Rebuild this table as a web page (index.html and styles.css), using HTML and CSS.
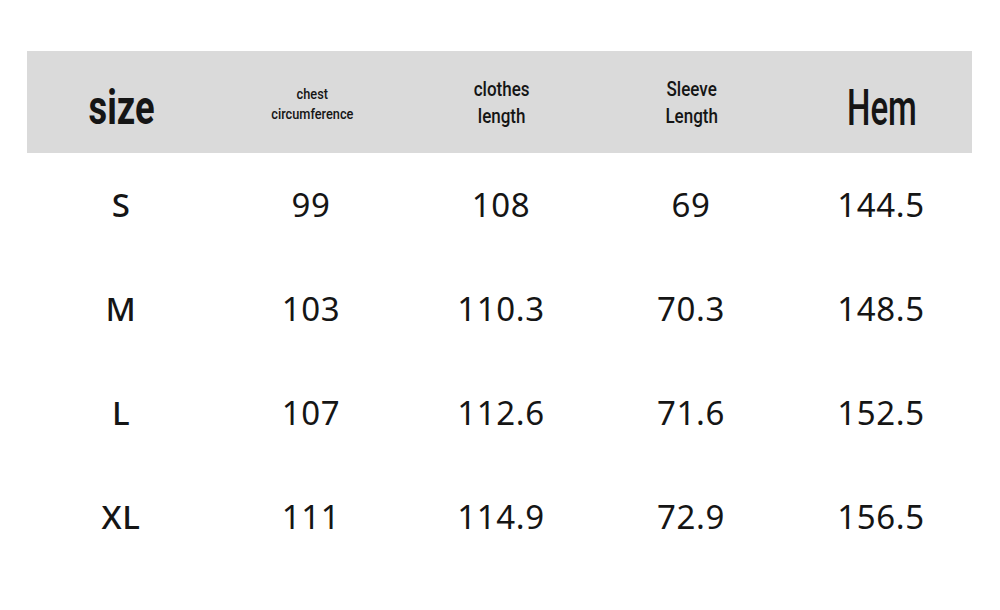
FILE: index.html
```html
<!DOCTYPE html>
<html>
<head>
<meta charset="utf-8">
<link rel="stylesheet" href="styles.css">
</head>
<body>
<div class="table">
  <div class="head">
    <div class="hcell"><span class="h-size">size</span></div>
    <div class="hcell"><span class="h-small">chest<br>circumference</span></div>
    <div class="hcell"><span class="h-mid">clothes<br>length</span></div>
    <div class="hcell"><span class="h-mid">Sleeve<br>Length</span></div>
    <div class="hcell"><span class="h-hem">Hem</span></div>
  </div>
  <div class="row">
    <div class="cell size">S</div><div class="cell">99</div><div class="cell">108</div><div class="cell">69</div><div class="cell">144.5</div>
  </div>
  <div class="row">
    <div class="cell size">M</div><div class="cell">103</div><div class="cell">110.3</div><div class="cell">70.3</div><div class="cell">148.5</div>
  </div>
  <div class="row">
    <div class="cell size">L</div><div class="cell">107</div><div class="cell">112.6</div><div class="cell">71.6</div><div class="cell">152.5</div>
  </div>
  <div class="row">
    <div class="cell size">XL</div><div class="cell">111</div><div class="cell">114.9</div><div class="cell">72.9</div><div class="cell">156.5</div>
  </div>
</div>
</body>
</html>
```

FILE: styles.css
```css
html, body {
  margin: 0;
  padding: 0;
  background: #ffffff;
}
body {
  width: 1000px;
  height: 610px;
  overflow: hidden;
  font-family: "Noto Sans", "Open Sans", sans-serif;
  color: #111;
}
.table {
  padding-top: 51px;
  padding-left: 27px;
}
.head {
  width: 945px;
  height: 102px;
  background: #dadada;
  display: grid;
  grid-template-columns: repeat(5, 190px);
}
.hcell {
  display: flex;
  align-items: center;
  justify-content: center;
  text-align: center;
  font-family: "Roboto", sans-serif;
  color: #151515;
}
.hcell:first-child { margin-left: -1px; }
.hcell span {
  display: inline-block;
  white-space: nowrap;
}
.h-size {
  font-size: 49px;
  font-weight: 700;
  transform: scaleX(0.74);
  line-height: 1;
  margin-top: 10px;
}
.h-small {
  font-size: 15px;
  font-weight: 500;
  line-height: 20px;
  transform: scaleX(0.85);
  margin-top: 3px;
}
.h-mid {
  font-size: 20.5px;
  font-weight: 500;
  line-height: 27px;
  transform: scaleX(0.83);
  margin-top: 1px;
}
.h-hem {
  font-size: 50px;
  font-weight: 500;
  line-height: 1;
  transform: scaleX(0.66);
  margin-top: 12px;
}
.row {
  display: grid;
  grid-template-columns: repeat(5, 190px);
  height: 104px;
  margin-left: -1px;
}
.cell {
  display: flex;
  align-items: center;
  justify-content: center;
  font-size: 33px;
  font-weight: 400;
  letter-spacing: 0.6px;
  color: #151515;
  padding-bottom: 2px;
}
.cell.size {
  font-weight: 500;
}
```
